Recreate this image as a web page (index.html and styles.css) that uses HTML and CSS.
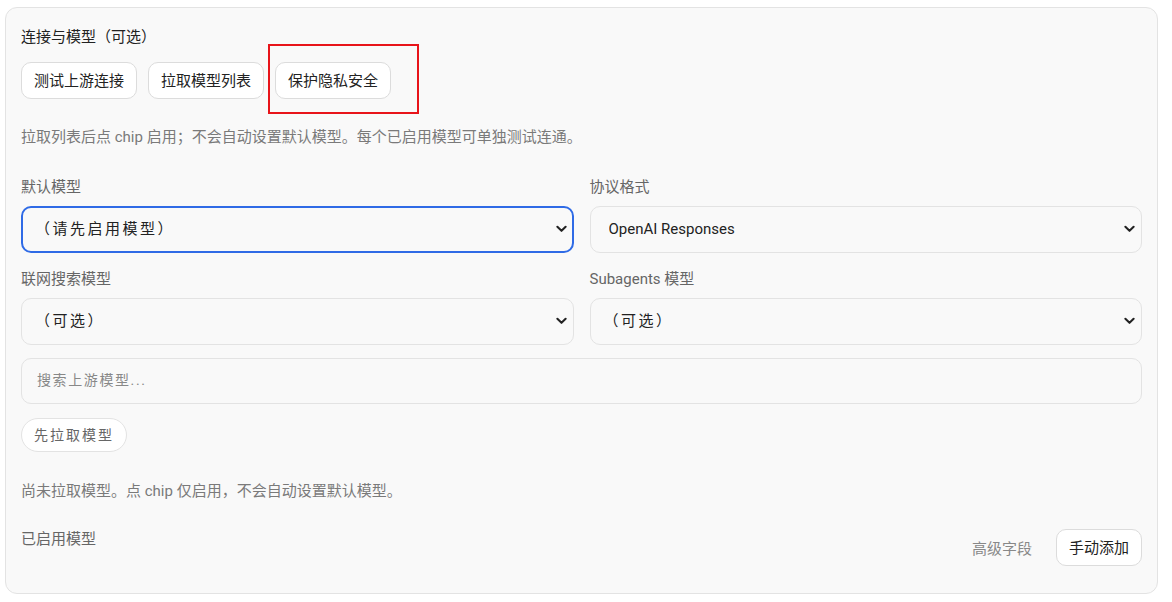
FILE: index.html
```html
<!DOCTYPE html>
<html lang="zh-CN">
<head>
    <meta charset="UTF-8">
    <meta name="viewport" content="width=device-width, initial-scale=1.0">
    <title>连接与模型</title>
    <link rel="stylesheet" href="styles.css">
</head>
<body>

<div class="panel">
    <div class="panel-title">连接与模型（可选）</div>

    <div class="actions">
        <button class="btn">测试上游连接</button>
        <button class="btn">拉取模型列表</button>
        <button class="btn">保护隐私安全</button>
        <div class="highlight"></div>
    </div>

    <p class="hint hint-top">拉取列表后点 chip 启用；不会自动设置默认模型。每个已启用模型可单独测试连通。</p>

    <div class="fields">
        <div class="field">
            <label class="field-label">默认模型</label>
            <div class="select-wrap">
                <select class="select spaced focused">
                    <option>（请先启用模型）</option>
                </select>
                <svg class="chevron" viewBox="0 0 12 8"><path d="M1.5 1.5 L6 6 L10.5 1.5" /></svg>
            </div>
        </div>
        <div class="field">
            <label class="field-label">协议格式</label>
            <div class="select-wrap">
                <select class="select">
                    <option>OpenAI Responses</option>
                </select>
                <svg class="chevron" viewBox="0 0 12 8"><path d="M1.5 1.5 L6 6 L10.5 1.5" /></svg>
            </div>
        </div>
        <div class="field">
            <label class="field-label">联网搜索模型</label>
            <div class="select-wrap">
                <select class="select spaced">
                    <option>（可选）</option>
                </select>
                <svg class="chevron" viewBox="0 0 12 8"><path d="M1.5 1.5 L6 6 L10.5 1.5" /></svg>
            </div>
        </div>
        <div class="field">
            <label class="field-label">Subagents 模型</label>
            <div class="select-wrap">
                <select class="select spaced">
                    <option>（可选）</option>
                </select>
                <svg class="chevron" viewBox="0 0 12 8"><path d="M1.5 1.5 L6 6 L10.5 1.5" /></svg>
            </div>
        </div>
    </div>

    <input class="search" type="text" placeholder="搜索上游模型...">

    <button class="pill">先拉取模型</button>

    <p class="hint hint-bottom">尚未拉取模型。点 chip 仅启用，不会自动设置默认模型。</p>

    <div class="enabled-row">
        <div class="enabled-label">已启用模型</div>
        <div class="enabled-tools">
            <span class="link-muted">高级字段</span>
            <button class="btn">手动添加</button>
        </div>
    </div>
</div>

</body>
</html>
```

FILE: styles.css
```css
body {
    margin: 0;
    background: #fff;
    font-family: Roboto, 'Noto Sans CJK SC', sans-serif;
    color: #222;
}
.panel {
    box-sizing: border-box;
    width: 1153px;
    height: 587px;
    margin: 7px 0 0 5px;
    padding: 19px 15px 0 15px;
    background: #f9f9f9;
    border: 1px solid #e3e3e3;
    border-radius: 12px;
}
.panel-title {
    font-size: 15px;
    line-height: 20px;
}
.actions {
    position: relative;
    display: flex;
    gap: 11px;
    margin-top: 15px;
}
.btn {
    height: 37px;
    padding: 0 12px 2px;
    background: #fff;
    border: 1px solid #dcdcdc;
    border-radius: 10px;
    font-family: inherit;
    font-size: 15px;
    color: #222;
}
.highlight {
    position: absolute;
    left: 247px;
    top: -18px;
    width: 147px;
    height: 66px;
    border: 2px solid #e8141a;
    pointer-events: none;
}
.hint {
    margin: 0;
    font-size: 15px;
    line-height: 20px;
    color: #7a7a7a;
}
.hint-top {
    margin-top: 28px;
}
.fields {
    display: grid;
    grid-template-columns: 1fr 1fr;
    column-gap: 16px;
    row-gap: 16px;
    margin-top: 30px;
}
.field-label {
    display: block;
    font-size: 15px;
    line-height: 20px;
    color: #666;
    margin-bottom: 9px;
}
.select-wrap {
    position: relative;
}
.select {
    appearance: none;
    box-sizing: border-box;
    width: 100%;
    height: 47px;
    padding: 0 40px 2px 18px;
    background: #f9f9f9;
    border: 1px solid #e3e3e3;
    border-radius: 10px;
    font-family: inherit;
    font-size: 15px;
    color: #222;
    outline: none;
}
.select.spaced {
    padding-left: 13px;
    letter-spacing: 2.5px;
}
.select.focused {
    border: 2px solid #2f6be6;
    padding-left: 12px;
}
.chevron {
    position: absolute;
    right: 7px;
    top: 19px;
    width: 11px;
    height: 8px;
    fill: none;
    stroke: #222;
    stroke-width: 2.2;
    stroke-linecap: round;
    stroke-linejoin: round;
    pointer-events: none;
}
.search {
    display: block;
    box-sizing: border-box;
    width: 100%;
    height: 46px;
    margin-top: 13px;
    padding: 0 15px 2px;
    background: #f9f9f9;
    border: 1px solid #e3e3e3;
    border-radius: 10px;
    font-family: inherit;
    font-size: 14px;
    letter-spacing: 1.6px;
    outline: none;
}
.search::placeholder {
    color: #888;
}
.pill {
    display: block;
    height: 34px;
    margin-top: 14px;
    padding: 0 12px 2px;
    background: #fff;
    border: 1px solid #e3e3e3;
    border-radius: 17px;
    font-family: inherit;
    font-size: 14px;
    letter-spacing: 2px;
    color: #666;
}
.hint-bottom {
    margin-top: 29px;
}
.enabled-row {
    display: flex;
    justify-content: space-between;
    align-items: flex-start;
    margin-top: 28px;
}
.enabled-label {
    font-size: 15px;
    line-height: 20px;
    color: #666;
}
.enabled-tools {
    display: flex;
    align-items: center;
    gap: 24px;
}
.link-muted {
    font-size: 15px;
    color: #888;
}
```
